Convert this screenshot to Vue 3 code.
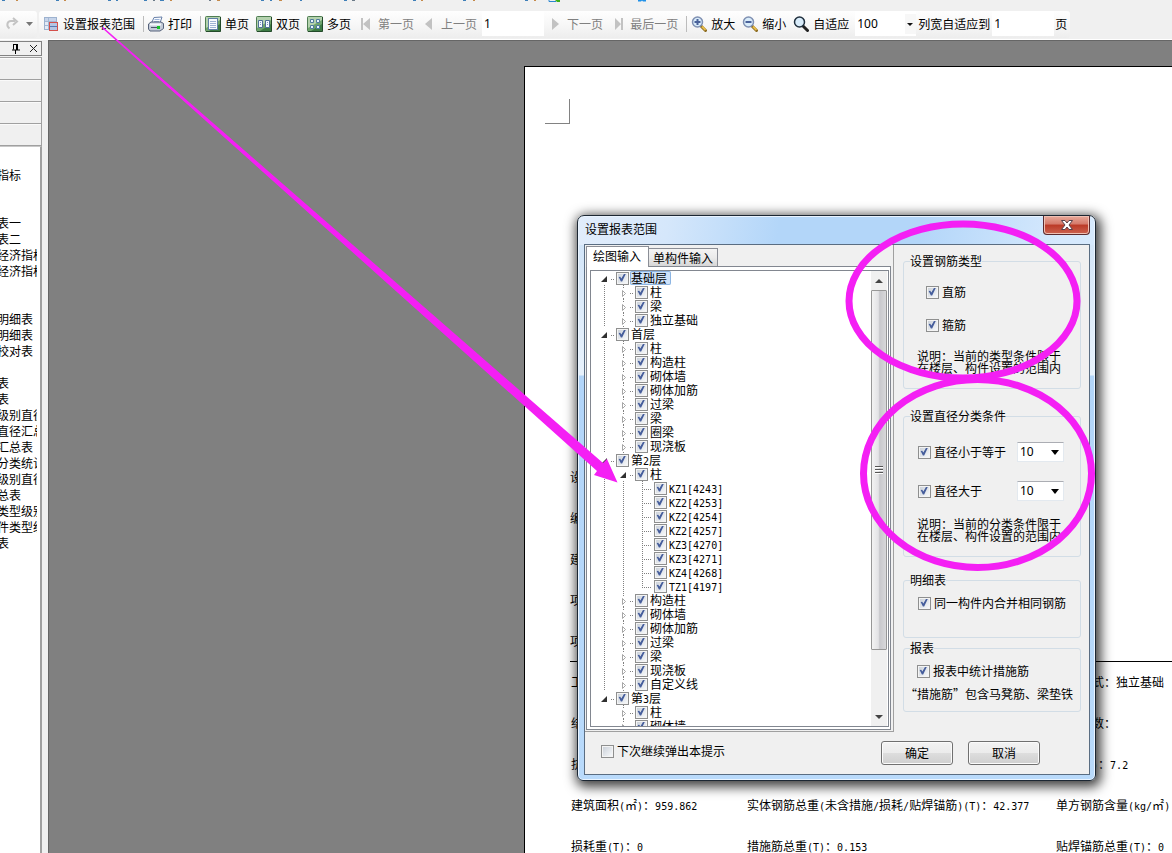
<script setup>
import { h, ref } from 'vue'

// Renders text with half-width characters in a fixed 6px cell.
const Txt = (props) =>
  h('span', null, (props.t.match(/[\x20-\x7e]+|[^\x20-\x7e]+/g) || []).map((part) =>
    h('span', { class: /^[\x20-\x7e]/.test(part) ? 'half' : 'full' }, part)))
Txt.props = ['t']

const menuMarks = [
  [2, 3, 'b'], [16, 2, 'o'], [56, 3, 'b'], [64, 2, 'o'], [108, 3, 'b'], [116, 2, 'b'],
  [144, 3, 'b'], [153, 2, 'g'], [160, 4, 'b'], [170, 2, 'o'], [209, 2, 'g'], [217, 3, 'o'],
  [261, 3, 'b'], [270, 2, 'b'], [279, 3, 'o'], [300, 2, 'b'], [344, 3, 'b'], [352, 3, 'g'],
  [413, 3, 'b'], [421, 2, 'o'], [463, 3, 'b'], [473, 2, 'o'], [525, 3, 'b'], [534, 2, 'o'],
]

const pageButtons = [
  { icon: 'single', text: '单页' },
  { icon: 'double', text: '双页' },
  { icon: 'multi', text: '多页' },
]
const zoomButtons = [
  { icon: 'in', text: '放大' },
  { icon: 'out', text: '缩小' },
  { icon: 'fit', text: '自适应' },
]

const reports = [
  '', '指标', '', '', '表一', '表二', '经济指标', '经济指标', '', '', '明细表', '明细表', '校对表', '',
  '表', '表', '级别直径', '直径汇总', '汇总表', '分类统计', '级别直径', '总表', '类型级别', '件类型级', '表',
]

const docTop = ['设计单位：', '编制单位：', '建设单位：', '项目名称：', '项目代号：']
const docRows = [
  ['工程类别：', '', '基础形式：独立基础'],
  ['结构类型：', '', '地上层数：'],
  ['抗震等级：', '', '檐高(m)：7.2'],
  ['建筑面积(㎡)：959.862', '实体钢筋总重(未含措施/损耗/贴焊锚筋)(T)：42.377', '单方钢筋含量(kg/㎡)'],
  ['损耗重(T)：0', '措施筋总重(T)：0.153', '贴焊锚筋总重(T)：0'],
]

const floors = [
  { name: '基础层', kids: ['柱', '梁', '独立基础'] },
  { name: '首层', kids: ['柱', '构造柱', '砌体墙', '砌体加筋', '过梁', '梁', '圈梁', '现浇板'] },
  {
    name: '第2层',
    leaves: ['KZ1[4243]', 'KZ2[4253]', 'KZ2[4254]', 'KZ2[4257]', 'KZ3[4270]', 'KZ3[4271]', 'KZ4[4268]', 'TZ1[4197]'],
    kids: ['柱', '构造柱', '砌体墙', '砌体加筋', '过梁', '梁', '现浇板', '自定义线'],
  },
  { name: '第3层', last: true, kids: ['柱', '砌体墙'] },
]
const rows = []
floors.forEach((f) => {
  rows.push({ name: f.name, cells: ['open'] })
  const guide = f.last ? 'blank' : 'line'
  f.kids.forEach((k, i) => {
    const opened = i === 0 && f.leaves
    rows.push({ name: k, cells: [guide, opened ? 'open' : 'closed'] })
    if (opened) {
      f.leaves.forEach((l, j) =>
        rows.push({ name: l, cells: [guide, 'line', j === f.leaves.length - 1 ? 'end' : 'leaf'] }))
    }
  })
})
const tree = ref(rows.map((r, i) => ({ ...r, id: 'node' + i, on: true, selected: i === 0 })))
</script>

<template>
  <div class="app">
    <svg class="menu-strip" width="660" height="11">
      <rect v-for="m in menuMarks" :key="m[0]" :x="m[0]" y="0" :width="m[1]" height="1" :class="m[2]" />
      <path d="M549 0v1.5h7" fill="none" stroke="#2a86d0" />
      <path d="M555 0h5v2h-3z" fill="#3cae1c" />
      <path d="M638 0h8v1.500h-3l-1-1-1 1h-3z" fill="#1e90e8" />
    </svg>

    <header class="toolbars">
      <div class="bar undo-bar">
        <button class="plain" aria-label="重做">
          <svg width="14" height="14" viewBox="0 0 14 14"><path d="M4.500 11.500C1 9 2 4 6 4h4M8 1l4 3.500-4 3.500" fill="none" stroke="#c4c4c4" stroke-width="2" /></svg>
        </button>
        <svg width="7" height="4"><path d="M0 0h7l-3.500 4z" fill="#777" /></svg>
      </div>
      <div class="bar main-bar">
        <button class="tool">
          <svg width="16" height="16" viewBox="0 0 16 16">
            <rect x="1.500" y="1.500" width="12" height="12" fill="#fff" stroke="#9db2cf" />
            <path d="M2 2h11v3H2z" fill="#c6d4ea" /><path d="M2 5h3v8H2z" fill="#e4ebf6" />
            <path d="M2 5.500h11M2 9.500h11M5.500 2v11M9.500 5v8" stroke="#a3b7d4" />
            <rect x="6.500" y="6.500" width="8" height="8" fill="#b4c6e4" stroke="#d4504c" />
            <path d="M7 10.500h7" stroke="#5579b4" />
          </svg>
          <span>设置报表范围</span>
        </button>
        <i class="sep"></i>
        <button class="tool">
          <svg width="16" height="16" viewBox="0 0 16 16">
            <path d="M6 1.500 14 1l-2 6H3.500z" fill="#f8fbff" stroke="#6880a8" />
            <path d="M6.500 3.500h5M6 5.500h5" stroke="#9ab3d8" />
            <path d="M.5 8 3 6h10l2.500 1.500v5L12 15H2L.5 13z" fill="#c3cbd8" stroke="#55617a" />
            <path d="M2 8.500h11" stroke="#f5f8fc" stroke-width="2" /><path d="M3 11.500h6" stroke="#48536a" />
            <path d="M9 10h3v3H9z" fill="#16c428" />
          </svg>
          <span>打印</span>
        </button>
        <i class="sep"></i>
        <button v-for="b in pageButtons" :key="b.icon" class="tool">
          <svg width="16" height="16" viewBox="0 0 16 16">
            <rect x=".5" y=".5" width="15" height="15" rx="1" fill="#6ea36c" stroke="#4f7d52" />
            <path d="M1 1h14v3L1 12z" fill="#b4d2ae" />
            <path d="M15 8v7H4z" fill="#3c7a44" />
            <path d="M15.500 1v14.500H1" fill="none" stroke="#234a2a" />
            <template v-if="b.icon === 'single'">
              <rect x="3.500" y="2.500" width="9" height="11" fill="#f8fbff" stroke="#5f7fa6" />
              <path d="M5 5.500h6M5 7.500h6M5 9.500h6M5 11.500h6" stroke="#9db3d4" />
            </template>
            <template v-else-if="b.icon === 'double'">
              <path d="M2.500 4.500h4v7h-4zM9.500 4.500h4v7h-4z" fill="#f4f9ff" stroke="#4f7096" />
              <path d="M4 6.500h1M4 8.500h1M11 6.500h1M11 8.500h1" stroke="#7490bd" />
            </template>
            <path v-else d="M3.500 3.500h3v3h-3zM9.500 3.500h3v3h-3zM3.500 9.500h3v3h-3zM9.500 9.500h3v3h-3z" fill="#e9f4ff" stroke="#4f7b9c" />
          </svg>
          <span>{{ b.text }}</span>
        </button>
        <button class="tool" disabled>
          <svg width="16" height="16"><path d="M3 2h2v12H3zM12 2v12L5 8z" fill="#c2c2c2" /></svg><span>第一页</span>
        </button>
        <button class="tool tight" disabled>
          <svg width="16" height="16"><path d="M11 2v12L4 8z" fill="#c2c2c2" /></svg><span>上一页</span>
        </button>
        <input class="num" value="1" aria-label="当前页" />
        <button class="tool next" disabled>
          <svg width="16" height="16"><path d="M5 2v12l7-6z" fill="#c2c2c2" /></svg><span>下一页</span>
        </button>
        <button class="tool" disabled>
          <svg width="16" height="16"><path d="M5 2v12l6-6zM11 2h2v12h-2z" fill="#c2c2c2" /></svg><span>最后一页</span>
        </button>
        <i class="sep"></i>
        <button v-for="b in zoomButtons" :key="b.icon" class="tool">
          <svg width="16" height="16" viewBox="0 0 16 16">
            <path d="m10 10 4.500 4.500" :stroke="b.icon === 'fit' ? '#222' : '#8a6a20'" stroke-width="3" stroke-linecap="round" />
            <path v-if="b.icon !== 'fit'" d="m11 10.500 3.500 3.500" stroke="#e6bb48" stroke-width="2" />
            <circle cx="6.500" cy="6" r="5" fill="#d9ecfa" :stroke="b.icon === 'fit' ? '#1f2f3d' : '#7f90b2'" stroke-width="1.500" />
            <path v-if="b.icon !== 'fit'" d="M3.500 6h6" stroke="#4a629a" stroke-width="2" />
            <path v-if="b.icon === 'in'" d="M6.500 3v6" stroke="#4a629a" stroke-width="2" />
          </svg>
          <span>{{ b.text }}</span>
        </button>
        <span class="zoom-box">
          <select aria-label="缩放比例"><option>100</option></select>
          <svg width="11" height="20"><path d="M2 9h6L5 12z" fill="#111" /></svg>
        </span>
        <label class="fit-label" for="fitcols">列宽自适应到</label>
        <input id="fitcols" class="num" value="1" />
        <span class="unit">页</span>
      </div>
    </header>

    <div class="work">
      <aside class="side">
        <div class="side-head">
          <button class="plain" aria-label="固定">
            <svg width="8" height="10"><path d="M1.500 0v5.500M1 .5h5M5 0v6M0 6h8M3.500 6v4" fill="none" stroke="#000" /><path d="M4 0h2v6H4z" /></svg>
          </button>
          <button class="plain" aria-label="关闭">
            <svg width="9" height="9"><path d="m1 1 7 7M8 1 1 8" stroke="#222" /></svg>
          </button>
        </div>
        <div class="bands"><i v-for="n in 4" :key="n"></i></div>
        <ul class="reports"><li v-for="(r, i) in reports" :key="i">{{ r }}</li></ul>
      </aside>

      <main class="canvas">
        <section class="paper">
          <div class="corner"></div>
          <div class="doc-head"><p v-for="d in docTop" :key="d"><Txt :t="d" /></p></div>
          <div class="doc-grid">
            <template v-for="(r, i) in docRows" :key="i">
              <p v-for="(c, j) in r" :key="j"><Txt :t="c" /></p>
            </template>
          </div>
        </section>
      </main>
    </div>

    <div class="dialog" role="dialog" aria-labelledby="dlg-title">
      <div class="title">
        <h1 id="dlg-title">设置报表范围</h1>
        <button class="close" aria-label="关闭">
          <svg width="12" height="10" viewBox="0 0 12 10"><path d="M.5.5h3.500L6 3 8 .5h3.500L8 5l3.500 4.500H8L6 7 4 9.500H.5L4 5z" fill="#fff" stroke="#57404a" /></svg>
        </button>
      </div>
      <div class="client">
        <div class="panes">
          <div class="left-pane">
            <div class="tabs" role="tablist">
              <button class="tab active" role="tab" aria-selected="true">绘图输入</button>
              <button class="tab" role="tab" aria-selected="false">单构件输入</button>
            </div>
            <div class="tab-page">
              <div class="tree">
                <div class="tree-view">
                  <div v-for="n in tree" :key="n.id" class="node">
                    <svg v-for="(c, i) in n.cells" :key="i" width="19" height="14" fill="none" stroke="#808080">
                      <path v-if="c === 'line'" d="M9.500 0v14" stroke-dasharray="1 1" />
                      <template v-else-if="c === 'open'">
                        <path d="M16.500 8v1M18.500 8v1" />
                        <path d="M12 5v6H6z" fill="#303030" stroke="none" />
                      </template>
                      <template v-else-if="c === 'closed'">
                        <path d="M9.500 0v1M9.500 2v1M9.500 13v1M16.500 8v1M18.500 8v1" />
                        <path d="M8.500 5.500v6l3-3z" fill="#fff" stroke="#a6a6a6" />
                      </template>
                      <template v-else-if="c !== 'blank'">
                        <path :d="c === 'end' ? 'M9.500 0v9' : 'M9.500 0v14'" stroke-dasharray="1 1" />
                        <path d="M9 8.500h10" stroke-dasharray="1 1" />
                      </template>
                    </svg>
                    <input :id="n.id" v-model="n.on" type="checkbox" />
                    <label :for="n.id" :class="{ selected: n.selected }"><Txt :t="n.name" /></label>
                  </div>
                </div>
                <div class="scroll">
                  <button class="plain" aria-label="向上"><svg width="8" height="4"><path d="M0 4h8L4 0z" fill="#444" /></svg></button>
                  <div class="thumb"><i></i><i></i><i></i></div>
                  <button class="plain" aria-label="向下"><svg width="8" height="4"><path d="M0 0h8L4 4z" fill="#444" /></svg></button>
                </div>
              </div>
            </div>
          </div>

          <div class="right-pane">
            <fieldset class="g-type">
              <legend>设置钢筋类型</legend>
              <label class="check"><input type="checkbox" checked />直筋</label>
              <label class="check"><input type="checkbox" checked />箍筋</label>
              <p>说明：当前的类型条件限于<br />在楼层、构件设置的范围内</p>
            </fieldset>
            <fieldset class="g-dia">
              <legend>设置直径分类条件</legend>
              <div class="pair">
                <label class="check"><input type="checkbox" checked />直径小于等于</label>
                <span class="drop"><select aria-label="直径小于等于"><option>10</option></select><svg width="8" height="5"><path d="M0 0h8L4 5z" /></svg></span>
              </div>
              <div class="pair">
                <label class="check"><input type="checkbox" checked />直径大于</label>
                <span class="drop"><select aria-label="直径大于"><option>10</option></select><svg width="8" height="5"><path d="M0 0h8L4 5z" /></svg></span>
              </div>
              <p>说明：当前的分类条件限于<br />在楼层、构件设置的范围内</p>
            </fieldset>
            <fieldset class="g-detail">
              <legend>明细表</legend>
              <label class="check"><input type="checkbox" checked />同一构件内合并相同钢筋</label>
            </fieldset>
            <fieldset class="g-report">
              <legend>报表</legend>
              <label class="check"><input type="checkbox" checked />报表中统计措施筋</label>
              <p>“措施筋”包含马凳筋、梁垫铁</p>
            </fieldset>
          </div>
        </div>
        <footer class="foot">
          <label class="check"><input type="checkbox" />下次继续弹出本提示</label>
          <button class="push">确定</button>
          <button class="push">取消</button>
        </footer>
      </div>
    </div>

    <svg class="marks" aria-hidden="true">
      <path d="M102 28 597 471l-3 4 23.500 7.500-10.500-23.500-4 4L103 27z" fill="#f41ff4" />
      <g fill="none" stroke="#f41ff4" stroke-width="7">
        <ellipse cx="963" cy="301" rx="114" ry="77" />
        <ellipse cx="977.500" cy="473.500" rx="114" ry="94" />
      </g>
    </svg>
  </div>
</template>

<style>
body {
  background: #f0f0f0;
}
</style>

<style scoped>
.app {
  position: relative;
  display: flex;
  flex-direction: column;
  height: 100vh;
  overflow: hidden;
  background: #f0f0f0;
  color: #000;
  font: 12px/16px "Noto Sans CJK SC", sans-serif;
}
.app * {
  box-sizing: border-box;
}
.app :deep(.half) {
  font: 10px/12px "DejaVu Sans Mono", monospace;
}
button,
input,
select {
  margin: 0;
  font: inherit;
  color: inherit;
}
svg {
  display: block;
  flex: none;
}
p,
h1,
ul {
  margin: 0;
  padding: 0;
  list-style: none;
  font-size: 12px;
  font-weight: normal;
}
.plain {
  display: flex;
  padding: 0;
  border: 0;
  background: none;
}
.menu-strip .b {
  fill: #3f7fb8;
}
.menu-strip .o {
  fill: #c58a4a;
}
.menu-strip .g {
  fill: #6b7a88;
}

/* toolbars */
.toolbars {
  display: flex;
  flex: none;
  gap: 2px;
  height: 29px;
  border-bottom: 1px solid #fff;
  white-space: nowrap;
}
.bar {
  display: flex;
  align-items: center;
  height: 27px;
  padding-bottom: 2px;
  border-radius: 0 3px 3px 0;
  background: linear-gradient(#fefefe, #f7f7f7 50%, #ededed);
}
.undo-bar {
  gap: 7px;
  width: 37px;
  padding-left: 5px;
}
.main-bar {
  padding: 0 3px 2px 4px;
  border-radius: 3px;
}
.tool {
  display: flex;
  align-items: center;
  gap: 4px;
  padding: 0 7px 0 0;
  border: 0;
  background: none;
}
.tool:disabled {
  color: #808080;
}
.tool.tight {
  padding-right: 5px;
}
.tool.next {
  margin-left: 3px;
}
.sep {
  width: 1px;
  height: 16px;
  margin: 0 4px 0 1px;
  background: #bcbcbc;
}
.num {
  width: 62px;
  height: 25px;
  padding: 0 2px;
  border: 0;
  background: #fff;
  font-family: "Noto Sans", sans-serif;
}
.zoom-box {
  display: flex;
  align-items: center;
  height: 25px;
  margin-left: -1px;
  background: #fff;
}
.zoom-box select {
  width: 50px;
  height: 25px;
  padding: 0 2px;
  border: 0;
  background: #fff;
  appearance: none;
  font-family: "Noto Sans", sans-serif;
}
.zoom-box svg {
  background: #f7f7f7;
}
.fit-label {
  margin: 0 2px;
}
.unit {
  margin-left: 1px;
}

/* side panel */
.work {
  display: flex;
  flex: 1;
  min-height: 0;
}
.side {
  display: flex;
  flex: none;
  flex-direction: column;
  width: 42px;
  margin-right: 6px;
  padding-top: 1px;
}
.side-head {
  display: flex;
  flex: none;
  align-items: center;
  justify-content: flex-end;
  gap: 9px;
  height: 15px;
  margin-bottom: 1px;
  padding-right: 3px;
  border: 1px solid #828282;
  border-left: 0;
}
.bands {
  flex: none;
  border-top: 1px solid #a0a0a0;
  border-right: 1px solid #a0a0a0;
}
.bands i {
  display: block;
  height: 22px;
  border-bottom: 1px solid #a0a0a0;
  box-shadow: inset 0 1px #fafafa;
}
.reports {
  flex: 1;
  min-height: 0;
  padding-right: 3px;
  border-top: 1px solid #c8c8c8;
  border-right: 2px solid #a0a0a0;
  background: #fff;
}
.reports li {
  height: 16px;
  margin-left: -3px;
  overflow: hidden;
  line-height: 16px;
  white-space: nowrap;
}
.reports li:first-child {
  height: 20px;
}

/* document */
.canvas {
  flex: 1;
  min-width: 0;
  padding: 25px 0 0 475px;
  border-top: 1px solid #666;
  border-left: 1px solid #666;
  background: #808080;
  overflow: hidden;
}
.paper {
  height: 100%;
  border-top: 1px solid #000;
  border-left: 1px solid #000;
  background: #fff;
  overflow: hidden;
  white-space: nowrap;
}
.corner {
  width: 25px;
  height: 25px;
  margin: 32px 0 332px 20px;
  border-right: 1px solid #828282;
  border-bottom: 1px solid #828282;
}
.doc-head {
  margin-left: 45px;
  border-bottom: 1px solid #000;
}
.doc-head p {
  height: 41px;
  padding-top: 13px;
}
.doc-grid {
  display: grid;
  grid-template-columns: 176px 309px 1fr;
  grid-auto-rows: 41px;
  margin-left: 46px;
  padding-top: 12px;
}

/* dialog */
.dialog {
  position: absolute;
  top: 215px;
  left: 577px;
  width: 519px;
  padding: 0 5px 5px 6px;
  border: 1px solid #1c2733;
  border-radius: 7px 7px 6px 6px;
  background:
    linear-gradient(100deg, #e2edfb 0, #d5e7fb 90px, #b3d6f9 200px, #b3d6f9 340px, #d6e9fd 480px) top / 100% 29px no-repeat,
    linear-gradient(#cfe3f8, #e8f2fc 159px, #b2d5f9 160px, #b9dafb 100%);
  box-shadow: inset 0 0 0 1px #eaf4ff, 2px 3px 12px 3px rgba(0, 0, 0, 0.75);
}
.title {
  display: flex;
  align-items: center;
  justify-content: space-between;
  height: 28px;
  padding: 0 0 2px 1px;
}
.close {
  display: flex;
  align-items: center;
  justify-content: center;
  align-self: flex-start;
  width: 47px;
  height: 19px;
  padding: 0;
  border: 1px solid #5b2a2e;
  border-top: 0;
  border-radius: 0 0 4px 4px;
  background: linear-gradient(#e8a99a, #d5796a 45%, #bb3a27 50%, #cc6250);
  box-shadow: inset 0 0 0 1px #efc0b4;
}
.client {
  border: 1px solid #5a6d82;
  background: #f0f0f0;
}
.panes {
  display: flex;
}
.left-pane {
  flex: none;
  width: 309px;
  padding: 0 2px 1px 1px;
  border-right: 1px solid #a0a0a0;
  border-bottom: 1px solid #a0a0a0;
}
.tabs {
  display: flex;
  align-items: flex-end;
  height: 21px;
}
.tab {
  height: 18px;
  padding: 0 4px;
  border: 1px solid #8b8e96;
  border-bottom: 0;
  border-left: 0;
  background: linear-gradient(#f4f4f4, #ebebeb 50%, #d6d6d6);
  line-height: 16px;
}
.tab.active {
  position: relative;
  height: 21px;
  margin-bottom: -1px;
  padding: 0 7px 2px 6px;
  border-left: 1px solid #8b8e96;
  background: #fff;
}
.tab-page {
  padding: 3px 1px 2px 3px;
  border: 1px solid #828790;
  background: #fff;
}
.tree {
  display: flex;
  height: 457px;
  padding-right: 1px;
  border: 1px solid #828790;
}
.tree-view {
  flex: 1;
  padding-left: 4px;
  overflow: hidden;
}
.node {
  display: flex;
  align-items: center;
  height: 14px;
}
.node input {
  margin: 0 2px;
}
.node label {
  height: 14px;
  line-height: 14px;
  white-space: nowrap;
}
.node label.selected {
  margin-left: -1px;
  padding: 0 4px 0 1px;
  border-radius: 2px;
  background: #cfe3fa;
  box-shadow: inset 0 0 0 1px #8db5e2;
}
input[type="checkbox"] {
  position: relative;
  flex: none;
  width: 13px;
  height: 13px;
  border: 1px solid #8e8f8f;
  background: linear-gradient(135deg, #ccd2da, #f6f8fa) content-box, #f4f4f4;
  padding: 1px;
  appearance: none;
}
input[type="checkbox"]:checked::after {
  content: "";
  position: absolute;
  inset: 1px 2px 2px 1px;
  background: #465e9c;
  clip-path: polygon(8% 45%, 28% 40%, 42% 62%, 78% 0, 100% 0, 52% 100%, 36% 100%);
}
.scroll {
  display: flex;
  flex-direction: column;
  width: 16px;
  padding-top: 1px;
  background: #f0f0f0;
}
.scroll .plain {
  align-items: center;
  justify-content: center;
  height: 18px;
}
.thumb {
  display: flex;
  flex-direction: column;
  align-items: center;
  justify-content: center;
  gap: 1px;
  height: 360px;
  margin-bottom: auto;
  border: 1px solid #979797;
  border-radius: 1px;
  background: linear-gradient(90deg, #f3f3f3, #e3e3e6 45%, #c8c8cc 55%, #d8d8da);
}
.thumb i {
  width: 8px;
  height: 2px;
  border-top: 1px solid #555;
  background: #fff;
}
.right-pane {
  flex: 1;
  padding: 8px 8px 0 9px;
}
fieldset {
  min-width: 0;
  margin: 0;
  padding: 0;
  border: 1px solid #d2dde6;
  border-radius: 3px;
  white-space: nowrap;
}
legend {
  margin-left: 6px;
  padding: 0;
  line-height: 16px;
}
.check {
  display: flex;
  align-items: center;
  gap: 3px;
  height: 16px;
}
fieldset p {
  margin-left: 13px;
  line-height: 12px;
}
.g-type {
  height: 136px;
  margin-bottom: 19px;
}
.g-type .check {
  margin: 15px 0 17px 22px;
}
.g-type p {
  margin-top: 15px;
}
.g-dia {
  height: 149px;
  margin-bottom: 15px;
}
.pair {
  display: flex;
  align-items: center;
  justify-content: space-between;
  height: 20px;
  margin: 18px 16px 0 14px;
}
.pair + .pair {
  margin-top: 19px;
}
.g-dia p {
  margin-top: 17px;
}
.drop {
  display: flex;
  align-items: center;
  width: 47px;
  height: 20px;
  padding-right: 4px;
  border: 1px solid #e3e9ef;
  border-top-color: #abadb3;
  background: #fff;
}
.drop select {
  flex: 1;
  width: 30px;
  height: 18px;
  padding: 0 2px;
  border: 0;
  background: none;
  font-family: "Noto Sans", sans-serif;
  appearance: none;
}
.g-detail {
  height: 66px;
  margin-bottom: 2px;
}
.g-detail .check {
  margin: 7px 0 0 14px;
}
.g-report {
  height: 72px;
}
.g-report .check {
  margin: 7px 0 9px 13px;
}
.g-report p {
  margin-left: 1px;
}
.foot {
  display: flex;
  align-items: center;
  gap: 15px;
  height: 42px;
  padding: 0 49px 0 16px;
}
.foot .check {
  margin: 0 auto 4px 0;
}
.push {
  width: 72px;
  height: 24px;
  padding: 0;
  border: 1px solid #707070;
  border-radius: 3px;
  background: linear-gradient(#f3f3f3, #ebebeb 50%, #dddddd 51%, #cfcfcf);
  box-shadow: inset 0 0 0 1px #fbfbfb;
}
.marks {
  position: absolute;
  inset: 0;
  width: 100%;
  height: 100%;
  pointer-events: none;
}
</style>
